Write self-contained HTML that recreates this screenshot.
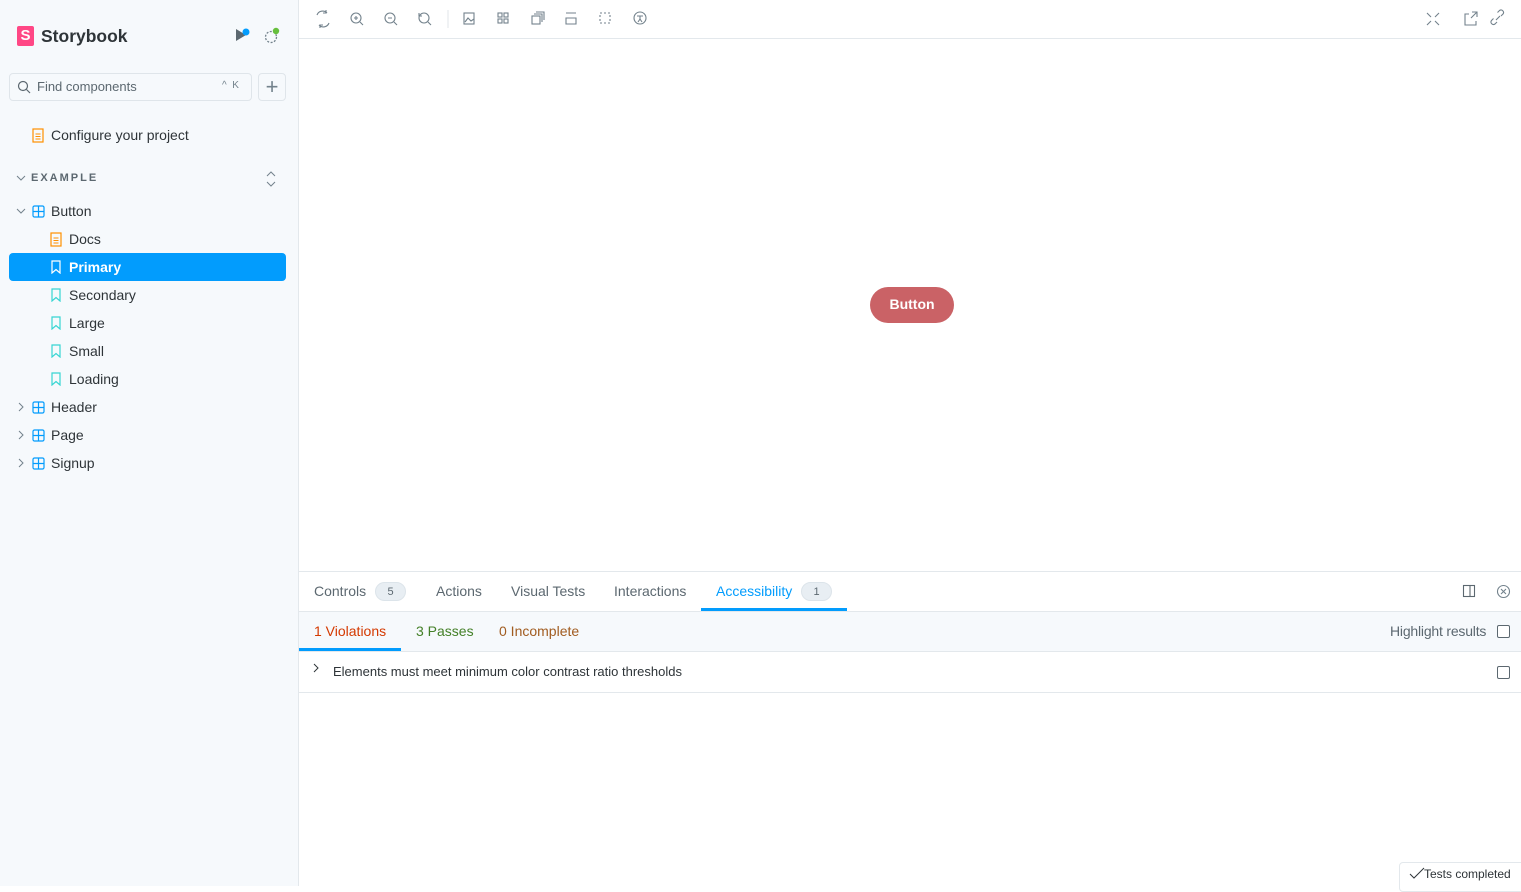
<!DOCTYPE html><html><head><style>
*{box-sizing:border-box;margin:0;padding:0}
body{width:1521px;height:886px;overflow:hidden;font-family:"Liberation Sans",sans-serif;font-size:13px;color:#2e3438;background:#fff;position:relative}
.a{position:absolute}
#sb{left:0;top:0;width:299px;height:886px;background:#f6f9fc;border-right:1px solid #e3e8ec}
</style></head><body>
<div id="sb" class="a">
 <div class="a" style="left:17px;top:26px;width:17px;height:20px;background:#ff4785;border-radius:2px;color:#fff;font-weight:bold;font-size:15px;text-align:center;line-height:20px">S</div>
 <div class="a" style="left:41px;top:26px;font-size:17.5px;font-weight:bold;color:#2e3438">Storybook</div>
 <svg class="a" style="left:234px;top:27px" width="16" height="16"><path d="M2 2 L2 14 L12 8Z" fill="#5c6870"/><circle cx="12" cy="5" r="3.5" fill="#029cfd"/></svg>
 <svg class="a" style="left:263px;top:27px" width="18" height="18"><circle cx="8" cy="10" r="5.5" fill="none" stroke="#73828c" stroke-width="1.3" stroke-dasharray="2 1.5"/><circle cx="13" cy="4" r="3.2" fill="#66bf3c"/></svg>
 <div class="a" style="left:9px;top:73px;width:243px;height:28px;border:1px solid #dfe5ea;border-radius:4px;background:#f6f9fc"></div>
 <svg class="a" style="left:17px;top:80px" width="14" height="14"><circle cx="6" cy="6" r="4.5" fill="none" stroke="#5c6870" stroke-width="1.2"/><path d="M9.5 9.5 L13 13" stroke="#5c6870" stroke-width="1.2"/></svg>
 <div class="a" style="left:37px;top:79px;font-size:13px;color:#5c6870">Find components</div>
 <div class="a" style="left:222px;top:80px;font-size:10px;color:#73828c">^ &nbsp;K</div>
 <div class="a" style="left:258px;top:73px;width:28px;height:28px;border:1px solid #dfe5ea;border-radius:4px;color:#73828c;font-size:22px;text-align:center;line-height:25px">+</div>
 <svg class="a" style="left:32px;top:128px" width="12" height="15"><rect x="1" y="1" width="10" height="13" fill="none" stroke="#ff8f00" stroke-width="1.2"/><path d="M3.5 6h5M3.5 8.5h5M3.5 11h5" stroke="#ff8f00"/></svg>
 <div class="a" style="left:51px;top:127px;font-size:14px">Configure your project</div>
 <svg class="a" style="left:16px;top:174px" width="10" height="8"><path d="M1 2 L5 6 L9 2" fill="none" stroke="#73828c"/></svg>
 <div class="a" style="left:31px;top:172px;font-size:11px;letter-spacing:2px;font-weight:bold;color:#5c6870">EXAMPLE</div>
 <svg class="a" style="left:265px;top:170px" width="12" height="18"><path d="M2 6 L6 2 L10 6 M2 12 L6 16 L10 12" fill="none" stroke="#73828c"/></svg>

 <svg class="a" style="left:16px;top:207px" width="10" height="8"><path d="M1 2 L5 6 L9 2" fill="none" stroke="#73828c"/></svg>
 <svg class="a" style="left:32px;top:205px" width="13" height="13"><rect x="1" y="1" width="11" height="11" rx="1.5" fill="none" stroke="#029cfd" stroke-width="1.2"/><path d="M6.5 1v11M1 6.5h11" stroke="#029cfd" stroke-width="1.2"/></svg>
 <div class="a" style="left:51px;top:203px;font-size:14px">Button</div>
 <svg class="a" style="left:50px;top:232px" width="12" height="15"><rect x="1" y="1" width="10" height="13" fill="none" stroke="#ff8f00" stroke-width="1.2"/><path d="M3.5 6h5M3.5 8.5h5M3.5 11h5" stroke="#ff8f00"/></svg>
 <div class="a" style="left:69px;top:231px;font-size:14px">Docs</div>
 <div class="a" style="left:9px;top:253px;width:277px;height:28px;background:#029cfd;border-radius:4px"></div>
 <svg class="a" style="left:51px;top:260px" width="10" height="14"><path d="M1 1h8v12L5 9.5 1 13Z" fill="none" stroke="#fff" stroke-width="1.2"/></svg>
 <div class="a" style="left:69px;top:259px;font-size:14px;font-weight:bold;color:#fff">Primary</div>
 <svg class="a" style="left:51px;top:288px" width="10" height="14"><path d="M1 1h8v12L5 9.5 1 13Z" fill="none" stroke="#37d5d3" stroke-width="1.2"/></svg>
 <div class="a" style="left:69px;top:287px;font-size:14px">Secondary</div>
 <svg class="a" style="left:51px;top:316px" width="10" height="14"><path d="M1 1h8v12L5 9.5 1 13Z" fill="none" stroke="#37d5d3" stroke-width="1.2"/></svg>
 <div class="a" style="left:69px;top:315px;font-size:14px">Large</div>
 <svg class="a" style="left:51px;top:344px" width="10" height="14"><path d="M1 1h8v12L5 9.5 1 13Z" fill="none" stroke="#37d5d3" stroke-width="1.2"/></svg>
 <div class="a" style="left:69px;top:343px;font-size:14px">Small</div>
 <svg class="a" style="left:51px;top:372px" width="10" height="14"><path d="M1 1h8v12L5 9.5 1 13Z" fill="none" stroke="#37d5d3" stroke-width="1.2"/></svg>
 <div class="a" style="left:69px;top:371px;font-size:14px">Loading</div>
 <svg class="a" style="left:17px;top:402px" width="8" height="10"><path d="M2 1 L6 5 L2 9" fill="none" stroke="#73828c"/></svg>
 <svg class="a" style="left:32px;top:401px" width="13" height="13"><rect x="1" y="1" width="11" height="11" rx="1.5" fill="none" stroke="#029cfd" stroke-width="1.2"/><path d="M6.5 1v11M1 6.5h11" stroke="#029cfd" stroke-width="1.2"/></svg>
 <div class="a" style="left:51px;top:399px;font-size:14px">Header</div>
 <svg class="a" style="left:17px;top:430px" width="8" height="10"><path d="M2 1 L6 5 L2 9" fill="none" stroke="#73828c"/></svg>
 <svg class="a" style="left:32px;top:429px" width="13" height="13"><rect x="1" y="1" width="11" height="11" rx="1.5" fill="none" stroke="#029cfd" stroke-width="1.2"/><path d="M6.5 1v11M1 6.5h11" stroke="#029cfd" stroke-width="1.2"/></svg>
 <div class="a" style="left:51px;top:427px;font-size:14px">Page</div>
 <svg class="a" style="left:17px;top:458px" width="8" height="10"><path d="M2 1 L6 5 L2 9" fill="none" stroke="#73828c"/></svg>
 <svg class="a" style="left:32px;top:457px" width="13" height="13"><rect x="1" y="1" width="11" height="11" rx="1.5" fill="none" stroke="#029cfd" stroke-width="1.2"/><path d="M6.5 1v11M1 6.5h11" stroke="#029cfd" stroke-width="1.2"/></svg>
 <div class="a" style="left:51px;top:455px;font-size:14px">Signup</div>
</div>

<div class="a" style="left:299px;top:38px;width:1222px;height:1px;background:#e3e8ec"></div>
<svg class="a" style="left:299px;top:0" width="1222" height="38" fill="none" stroke="#73828c" stroke-width="1.1">
 <path d="M18 15a6 6 0 0 1 10-2M30 23a6 6 0 0 1-10 2M27 10v3h-3M21 28v-3h3"/>
 <circle cx="57" cy="18" r="5"/><path d="M61 22l3 3M55 18h4M57 16v4"/>
 <circle cx="91" cy="18" r="5"/><path d="M95 22l3 3M89 18h4"/>
 <circle cx="125" cy="18" r="5"/><path d="M129 22l3 3M120 13v3h3"/>
 <path d="M149 10v18" stroke="#e3e8ec"/>
 <rect x="165" y="13" width="10" height="11"/><path d="M166 22l3-4 3 3 3-2"/>
 <rect x="199" y="13" width="4" height="4"/><rect x="205" y="13" width="4" height="4"/><rect x="199" y="19" width="4" height="4"/><rect x="205" y="19" width="4" height="4"/>
 <rect x="233" y="16" width="8" height="8"/><path d="M235 14h8v8M237 12h8v8"/>
 <path d="M267 13h10M267 18h10v6h-10z"/>
 <rect x="301" y="13" width="10" height="10" stroke-dasharray="2 2"/>
 <circle cx="341" cy="18" r="6"/><path d="M338 16h6M341 16v3l-2 3M341 19l2 3"/>
 <path d="M1128 13l4 4M1140 13l-4 4M1128 25l4-4M1140 25l-4-4"/>
 <path d="M1170 14h-4v11h11v-4M1173 12h5v5M1178 12l-6 6"/>
 <path d="M1198 22l-2 2a2.5 2.5 0 0 1-3.5-3.5l2-2M1202 16l2-2a2.5 2.5 0 0 0-3.5-3.5l-2 2M1197 20l4-4"/>
</svg>

<div class="a" style="left:870px;top:287px;width:84px;height:36px;background:#ca6266;border-radius:18px;color:#fff;font-weight:bold;font-size:14px;text-align:center;line-height:35px">Button</div>

<div class="a" style="left:299px;top:571px;width:1222px;height:1px;background:#e3e8ec"></div>
<div class="a" style="left:314px;top:583px;font-size:14px;color:#5c6870">Controls</div>
<div class="a" style="left:375px;top:582px;width:31px;height:19px;border-radius:10px;background:#e8eef3;border:1px solid #dce4ea;font-size:11px;text-align:center;line-height:18px;color:#5c6870">5</div>
<div class="a" style="left:436px;top:583px;font-size:14px;color:#5c6870">Actions</div>
<div class="a" style="left:511px;top:583px;font-size:14px;color:#5c6870">Visual Tests</div>
<div class="a" style="left:614px;top:583px;font-size:14px;color:#5c6870">Interactions</div>
<div class="a" style="left:716px;top:583px;font-size:14px;color:#029cfd">Accessibility</div>
<div class="a" style="left:801px;top:582px;width:31px;height:19px;border-radius:10px;background:#e8eef3;border:1px solid #dce4ea;font-size:11px;text-align:center;line-height:18px;color:#5c6870">1</div>
<div class="a" style="left:701px;top:608px;width:146px;height:3px;background:#029cfd"></div>
<svg class="a" style="left:1462px;top:584px" width="14" height="14" fill="none" stroke="#5c6870" stroke-width="1.1"><rect x="1.5" y="1.5" width="11" height="11"/><path d="M8 1.5v11" /></svg>
<svg class="a" style="left:1496px;top:584px" width="15" height="15" fill="none" stroke="#73828c" stroke-width="1.1"><circle cx="7.5" cy="7.5" r="6"/><path d="M5 5l5 5M10 5l-5 5"/></svg>
<div class="a" style="left:299px;top:611px;width:1222px;height:41px;background:#f6f9fc;border-top:1px solid #e3e8ec;border-bottom:1px solid #e3e8ec"></div>
<div class="a" style="left:314px;top:623px;font-size:14px;color:#d43900">1 Violations</div>
<div class="a" style="left:416px;top:623px;font-size:14px;color:#448028">3 Passes</div>
<div class="a" style="left:499px;top:623px;font-size:14px;color:#a15c20">0 Incomplete</div>
<div class="a" style="left:299px;top:648px;width:102px;height:3px;background:#029cfd"></div>
<div class="a" style="left:1390px;top:623px;font-size:14px;color:#5c6870;letter-spacing:-0.2px">Highlight results</div>
<div class="a" style="left:1497px;top:625px;width:13px;height:13px;border:1px solid #5c6870;border-radius:2px;background:#fff"></div>
<svg class="a" style="left:312px;top:663px" width="8" height="10"><path d="M2 1 L6 5 L2 9" fill="none" stroke="#2e3438"/></svg>
<div class="a" style="left:333px;top:664px;font-size:13px;color:#2e3438">Elements must meet minimum color contrast ratio thresholds</div>
<div class="a" style="left:1497px;top:666px;width:13px;height:13px;border:1px solid #5c6870;border-radius:2px"></div>
<div class="a" style="left:299px;top:692px;width:1222px;height:1px;background:#e3e8ec"></div>
<div class="a" style="left:1399px;top:862px;width:130px;height:30px;border:1px solid #e3e8ec;border-radius:4px;background:#fff"></div>
<svg class="a" style="left:1409px;top:867px" width="16" height="12"><path d="M1 7l4 4 10-10" fill="none" stroke="#2e3438" stroke-width="1"/></svg>
<div class="a" style="left:1424px;top:867px;font-size:12px;color:#2e3438">Tests completed</div>
</body></html>
